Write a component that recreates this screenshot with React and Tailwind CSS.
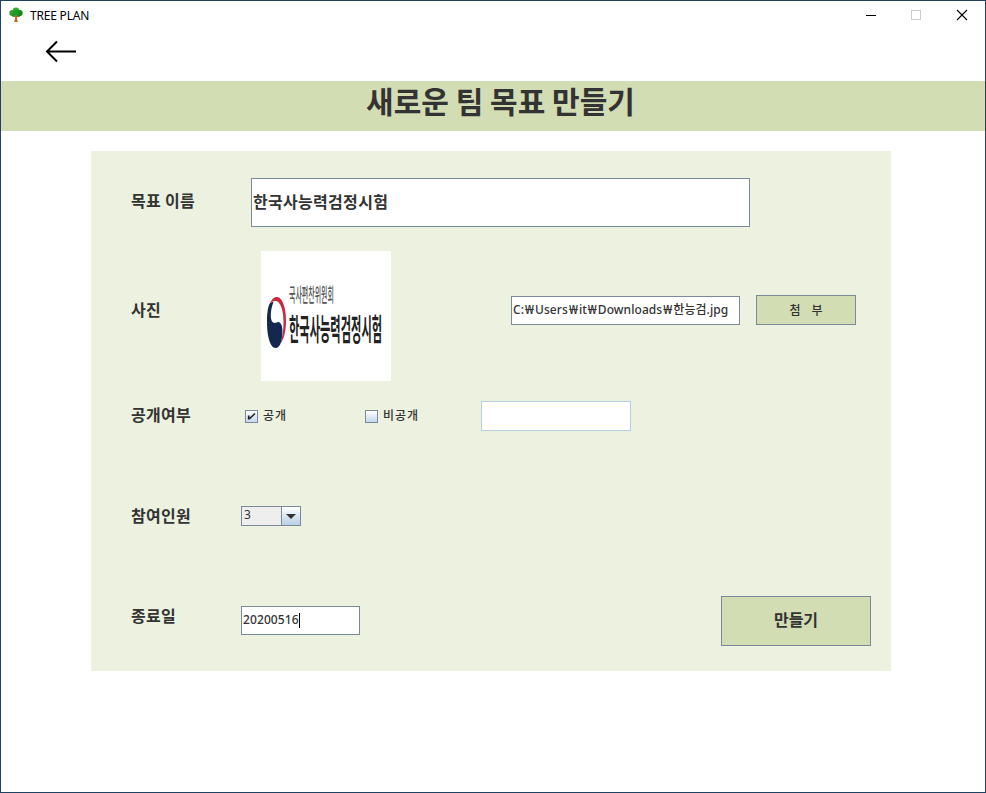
import React from "react";

function TreeIcon() {
  return (
    <svg width="14" height="16" viewBox="0 0 14 16">
      <path d="M6.2 9h1.8l.2 4 .8 2H5l.9-2z" fill="#c1691c" />
      <circle cx="7" cy="3.8" r="3.4" fill="#2fae2f" />
      <circle cx="3.2" cy="6" r="2.9" fill="#2aa52c" />
      <circle cx="10.8" cy="6" r="2.9" fill="#148a1c" />
      <circle cx="4.8" cy="8" r="2.1" fill="#1b9322" />
      <circle cx="9.4" cy="8" r="2.1" fill="#0f7d17" />
      <circle cx="7" cy="5.8" r="3" fill="#1f9a25" />
      <path d="M7.1 11 5 8.4M7.3 11l2-2.6" stroke="#c1691c" strokeWidth="1" />
    </svg>
  );
}

function TitleBar() {
  return (
    <div className="flex h-[30px] items-start">
      <div className="ml-2 mt-[6px]"><TreeIcon /></div>
      <span className="ml-[7px] mt-[6px] w-[60px] whitespace-nowrap text-[12px] leading-[18px] tracking-[-0.2px] text-black">TREE PLAN</span>
      <svg className="ml-auto mr-[17px] mt-[8px]" width="103" height="13" viewBox="0 0 103 13" fill="none" shapeRendering="crispEdges">
        <path d="M1 6.5h10" stroke="#000" />
        <rect x="46.5" y="1.5" width="9" height="9" stroke="#cccccc" />
        <path d="m92 1 10 10M102 1 92 11" stroke="#000" strokeWidth="1.1" shapeRendering="auto" />
      </svg>
    </div>
  );
}

function Label({ children }) {
  return <div className="w-[110px] shrink-0 whitespace-nowrap text-[16px] font-bold leading-6 tracking-[0.3px]">{children}</div>;
}

function Emblem() {
  return (
    <svg width="130" height="130" viewBox="0 0 130 130" className="overflow-visible">
      <rect width="130" height="130" fill="#fff" />
      <path d="M8.5 53C11 47.500 13.500 45.500 16.500 46C21.500 47 25 57 25 69C25 80 23 88 19.500 92.500C21.500 86 22.500 79 22.500 71C22.500 58 19 50 14.500 50C12 50 10 51 8.500 53Z" fill="#c92a3b" />
      <path d="M8.500 53C6.500 57 6 64 6 71C6 86 9.500 97 14.500 97C17 97 19 95 20 91C21.500 86 21.800 80 21 75.500C20 71.500 17.500 70 15.500 71.500C12.500 73 10 71 9.800 65C9.800 60 10.800 55 12.500 51C11 51 9.500 51.500 8.500 53Z" fill="#14284f" />
      <text transform="translate(28 51) scale(.368 1)" fontSize="19" fontWeight="500" fill="#555">국사편찬위원회</text>
      <text transform="translate(28 89) scale(.375 1)" fontSize="30" fontWeight="700" fill="#222">한국사능력검정시험</text>
    </svg>
  );
}

function Check({ checked, children }) {
  return (
    <div className="flex w-[120px] items-center">
      <span className="mr-[4px] flex h-[13px] w-[13px] items-center justify-center border border-[#7a8a99] bg-linear-to-b from-white to-[#c3d7ec]">
        {checked && (
          <svg width="9" height="9" viewBox="0 0 9 9" fill="none"><path d="M1.700 3.500v4M2.200 7 8 1.500" stroke="#222" strokeWidth="1.7" /></svg>
        )}
      </span>
      <span className="-mt-[2px] ml-px text-[12px] font-medium leading-[18px] tracking-[0.9px]">{children}</span>
    </div>
  );
}

function Won() {
  return <span className="inline-block w-[11px] text-center text-[13px] tracking-normal">₩</span>;
}

export default function App() {
  return (
    <div className="h-[793px] w-[986px] overflow-hidden border border-[#1f4260] bg-white font-['Noto_Sans','Noto_Sans_CJK_KR',sans-serif] text-[#333]">
      <TitleBar />
      <div className="h-[50px] pl-[44px] pt-[9px]">
        <svg width="32" height="23" viewBox="0 0 32 23" fill="none" stroke="#000" strokeWidth="2">
          <path d="M2 11.5h29M12 1.5l-10 10 10 10" />
        </svg>
      </div>
      <h1 className="h-[50px] whitespace-nowrap bg-[#d2ddb3] pl-[15px] text-center font-['Noto_Sans_CJK_KR',sans-serif] text-[30px] font-bold leading-[39px]">새로운 팀 목표 만들기</h1>

      <main className="ml-[90px] mt-5 h-[520px] w-[800px] bg-[#ecf1e0] pl-10 font-['Noto_Sans_CJK_KR',sans-serif]">
        <div className="flex h-[100px] items-start pt-[27px]">
          <div className="pt-[10px]"><Label>목표 이름</Label></div>
          <div className="ml-[10px] flex h-[49px] w-[499px] items-center border border-[#7a8a99] bg-white pb-[4px] pl-px text-[16px] font-bold tracking-[0.3px]">한국사능력검정시험</div>
        </div>

        <div className="flex h-[130px] items-center">
          <div className="pb-[14px]"><Label>사진</Label></div>
          <div className="ml-5 h-[130px] w-[130px]"><Emblem /></div>
          <div className="ml-[120px] mb-[12px] flex h-[29px] w-[229px] items-center whitespace-nowrap border border-[#7a8a99] bg-white pb-[2px] pl-px font-['Noto_Sans','Noto_Sans_CJK_KR',sans-serif] text-[12px] font-medium leading-[18px] tracking-[0.07px]">
            <span>C:<Won />Users<Won />it<Won />Downloads<Won />한능검.jpg</span>
          </div>
          <button className="mb-[12px] ml-4 h-[30px] w-[100px] whitespace-pre border border-[#7a8a99] bg-[#d2ddb3] text-[12px] font-medium">첨    부</button>
        </div>

        <div className="mt-5 flex h-[30px] items-center">
          <div className="pb-[4px]"><Label>공개여부</Label></div>
          <div className="ml-[4px] flex">
            <Check checked>공개</Check>
            <Check>비공개</Check>
          </div>
          <div className="-ml-[4px] h-[30px] w-[150px] border border-[#b8cfe5] bg-white" />
        </div>

        <div className="mt-[75px] flex h-5 items-center">
          <div className="pb-[3px]"><Label>참여인원</Label></div>
          <div className="flex h-5 w-[60px] border border-[#7a8a99] bg-[#eeeeee]">
            <span className="flex-1 pl-[2px] font-['Noto_Sans'] text-[12px] leading-[16px]">3</span>
            <span className="flex w-[19px] items-center justify-center border-l border-[#7a8a99] bg-linear-to-b from-white to-[#b8cfe5]">
              <svg width="10" height="5" viewBox="0 0 10 5"><path d="M0 0h10L5 5z" fill="#333" /></svg>
            </span>
          </div>
        </div>

        <div className="mt-[70px] flex h-[50px] items-start">
          <div className="pt-[7px]"><Label>종료일</Label></div>
          <div className="mt-[10px] flex h-[29px] w-[119px] items-center border border-[#7a8a99] bg-white pb-px pl-px font-['Noto_Sans'] text-[12px] font-medium tracking-[0.1px]">
            <span>20200516</span><span className="h-[15px] w-px bg-black" />
          </div>
          <button className="ml-[361px] h-[50px] w-[150px] border border-[#7a8a99] bg-[#d2ddb3] pb-[4px] text-[16px] font-bold">만들기</button>
        </div>
      </main>
    </div>
  );
}
